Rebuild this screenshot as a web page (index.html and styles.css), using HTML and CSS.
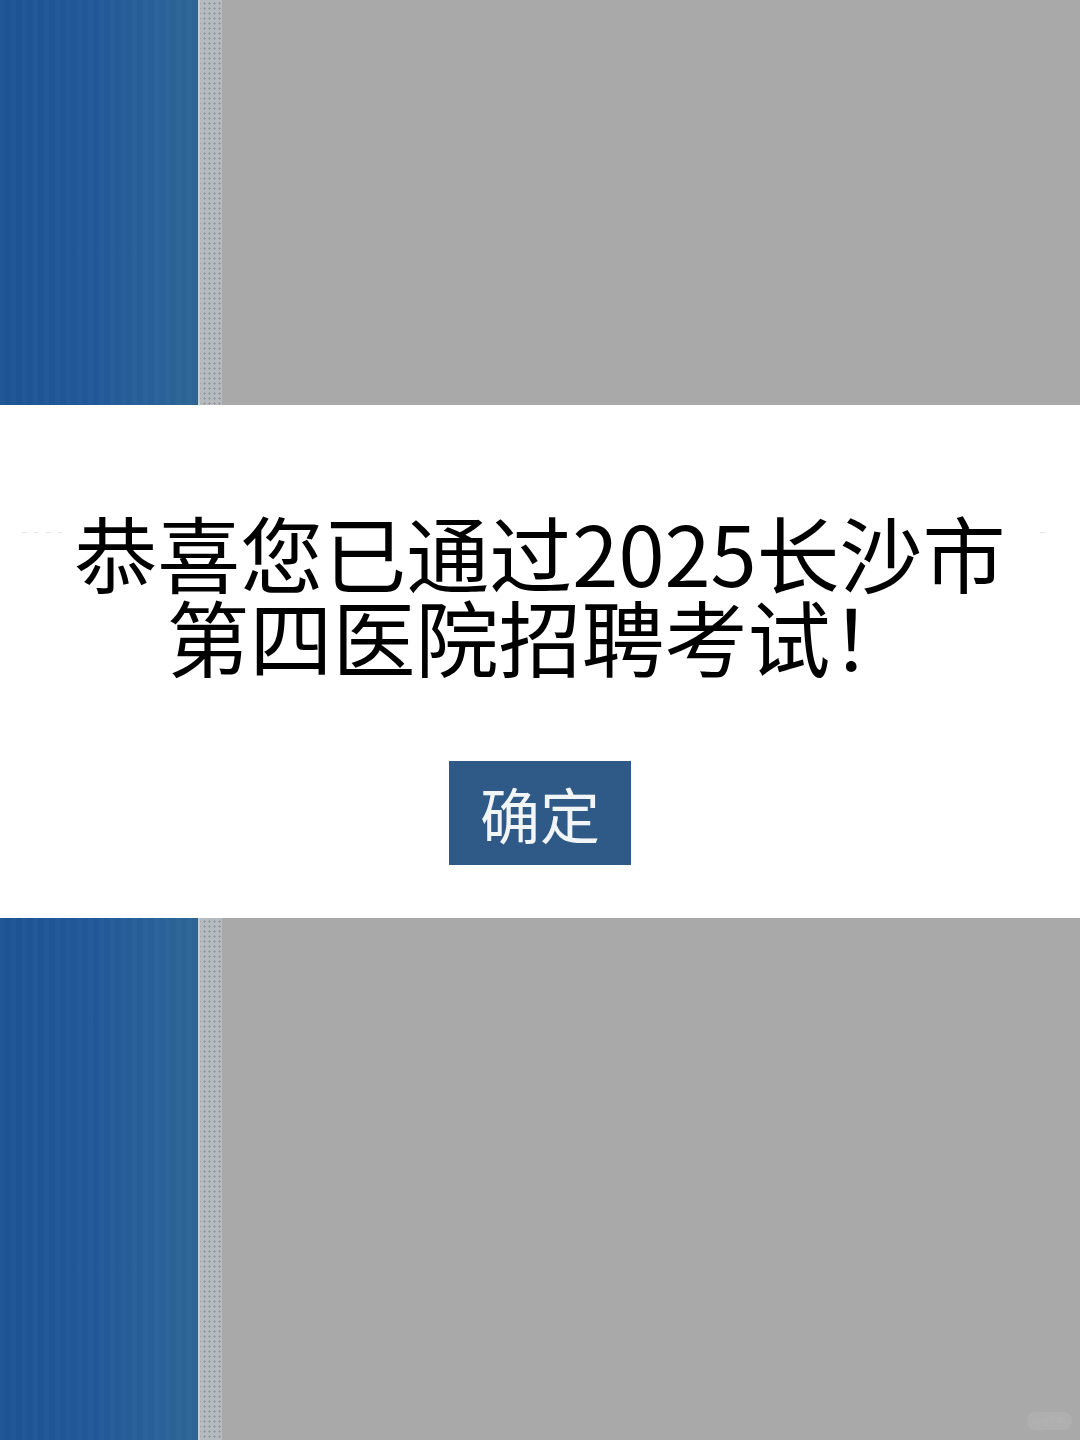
FILE: index.html
```html
<!DOCTYPE html>
<html lang="zh-CN">
<head>
<meta charset="utf-8">
<title>提示</title>
<link rel="stylesheet" href="styles.css">
</head>
<body>
<div class="page">
  <div class="bg-row top">
    <div class="blue"></div>
    <div class="dots"></div>
    <div class="gray"></div>
  </div>
  <div class="dialog">
    <div class="rule left"></div>
    <div class="rule right"></div>
    <p class="msg">恭喜您已通过2025长沙市<br>第四医院招聘考试！</p>
    <button class="ok">确定</button>
  </div>
  <div class="bg-row bottom">
    <div class="blue"></div>
    <div class="dots"></div>
    <div class="gray"><span class="mark">小红书</span></div>
  </div>
</div>
</body>
</html>
```
FILE: styles.css
```css
html, body {
  margin: 0;
  padding: 0;
  background: #a9a9a9;
}
.page {
  width: 1080px;
  height: 1440px;
  display: flex;
  flex-direction: column;
  overflow: hidden;
  font-family: "Noto Sans CJK SC", "Noto Sans", sans-serif;
}
.bg-row {
  display: flex;
  flex-direction: row;
}
.bg-row.top { height: 405px; }
.bg-row.bottom { flex: 1; }
.blue {
  width: 198px;
  background:
    repeating-linear-gradient(90deg, rgba(255,255,255,0.015) 0 5px, rgba(0,0,0,0.015) 5px 11px),
    linear-gradient(90deg, #1e5494 0%, #22589a 45%, #2a6299 80%, #2d6796 100%);
}
.dots {
  width: 22px;
  background-color: #b6bbbf;
  background-image: radial-gradient(circle, rgba(90,98,108,0.4) 0.9px, transparent 1.3px);
  background-size: 5px 5px;
  background-position: 2px 1px;
  border-left: 2px solid #c4ccd6;
}
.gray {
  flex: 1;
  background: #a9a9a9;
  position: relative;
}
.mark {
  position: absolute;
  right: 8px;
  bottom: 10px;
  font-size: 11px;
  color: #b4b4b4;
  background: #afafaf;
  border-radius: 8px;
  padding: 1px 6px;
}
.dialog {
  height: 513px;
  flex: none;
  background: #fff;
  display: flex;
  flex-direction: column;
  align-items: center;
  position: relative;
  box-sizing: border-box;
  padding-top: 104px;
}
.rule {
  position: absolute;
  top: 127px;
  height: 1px;
  background: repeating-linear-gradient(90deg, #ccc 0 5px, transparent 5px 12px);
  opacity: 0.5;
}
.rule.left { left: 22px; width: 40px; }
.rule.right { left: 1040px; width: 8px; }
.msg {
  margin: 0;
  font-size: 83px;
  line-height: 84px;
  color: #000;
  text-align: center;
  font-weight: 400;
}
.ok {
  margin-top: 84px;
  width: 182px;
  height: 104px;
  border: none;
  background: #2f5a87;
  color: #f2f5f8;
  font-family: "Noto Sans CJK SC", "Noto Sans", sans-serif;
  font-size: 60px;
  font-weight: 400;
  line-height: 104px;
  padding: 0;
}
```
